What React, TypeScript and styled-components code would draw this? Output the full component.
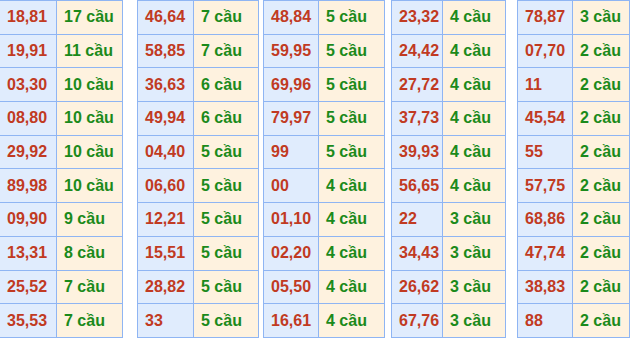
import React from 'react';
import styled, { createGlobalStyle } from 'styled-components';

const GlobalStyle = createGlobalStyle`
  html, body {
    margin: 0;
    padding: 0;
    background: #ffffff;
    overflow: hidden;
  }
`;

const Board = styled.div`
  display: flex;
  align-items: flex-start;
  width: 631px;
  height: 340px;
  overflow: hidden;
`;

const Table = styled.table<{ $width: number; $gap: number; $numCol: number }>`
  flex: none;
  width: ${(p) => p.$width}px;
  height: 338px;
  margin-left: ${(p) => p.$gap}px;
  border-collapse: collapse;
  table-layout: fixed;
  font-family: "Liberation Sans", Arial, sans-serif;
  font-size: 16px;
  font-weight: bold;

  col.num {
    width: ${(p) => p.$numCol}px;
  }
`;

const Cell = styled.td<{ $kind: 'num' | 'count' }>`
  border: 1px solid #8fb5f3;
  padding: 0 0 0 7px;
  text-align: left;
  vertical-align: middle;
  white-space: nowrap;
  background: ${(p) => (p.$kind === 'num' ? '#e0ecfd' : '#fef2df')};
  color: ${(p) => (p.$kind === 'num' ? '#c13a22' : '#1b8a1b')};
`;

type Group = {
  width: number;
  gap: number;
  numCol: number;
  rows: [string, number][];
};

const groups: Group[] = [
  {
    width: 124,
    gap: -1,
    numCol: 57,
    rows: [
      ['18,81', 17], ['19,91', 11], ['03,30', 10], ['08,80', 10], ['29,92', 10],
      ['89,98', 10], ['09,90', 9], ['13,31', 8], ['25,52', 7], ['35,53', 7],
    ],
  },
  {
    width: 122,
    gap: 14,
    numCol: 56,
    rows: [
      ['46,64', 7], ['58,85', 7], ['36,63', 6], ['49,94', 6], ['04,40', 5],
      ['06,60', 5], ['12,21', 5], ['15,51', 5], ['28,82', 5], ['33', 5],
    ],
  },
  {
    width: 122,
    gap: 4,
    numCol: 55,
    rows: [
      ['48,84', 5], ['59,95', 5], ['69,96', 5], ['79,97', 5], ['99', 5],
      ['00', 4], ['01,10', 4], ['02,20', 4], ['05,50', 4], ['16,61', 4],
    ],
  },
  {
    width: 115,
    gap: 6,
    numCol: 51,
    rows: [
      ['23,32', 4], ['24,42', 4], ['27,72', 4], ['37,73', 4], ['39,93', 4],
      ['56,65', 4], ['22', 3], ['34,43', 3], ['26,62', 3], ['67,76', 3],
    ],
  },
  {
    width: 113,
    gap: 11,
    numCol: 55,
    rows: [
      ['78,87', 3], ['07,70', 2], ['11', 2], ['45,54', 2], ['55', 2],
      ['57,75', 2], ['68,86', 2], ['47,74', 2], ['38,83', 2], ['88', 2],
    ],
  },
];

const App = () => {
  return (
    <>
      <GlobalStyle />
      <Board>
        {groups.map((g, i) => (
          <Table key={i} $width={g.width} $gap={g.gap} $numCol={g.numCol}>
            <colgroup>
              <col className="num" />
              <col />
            </colgroup>
            <tbody>
              {g.rows.map(([pair, count]) => (
                <tr key={pair}>
                  <Cell $kind="num">{pair}</Cell>
                  <Cell $kind="count">{count} cầu</Cell>
                </tr>
              ))}
            </tbody>
          </Table>
        ))}
      </Board>
    </>
  );
};

export default App;
